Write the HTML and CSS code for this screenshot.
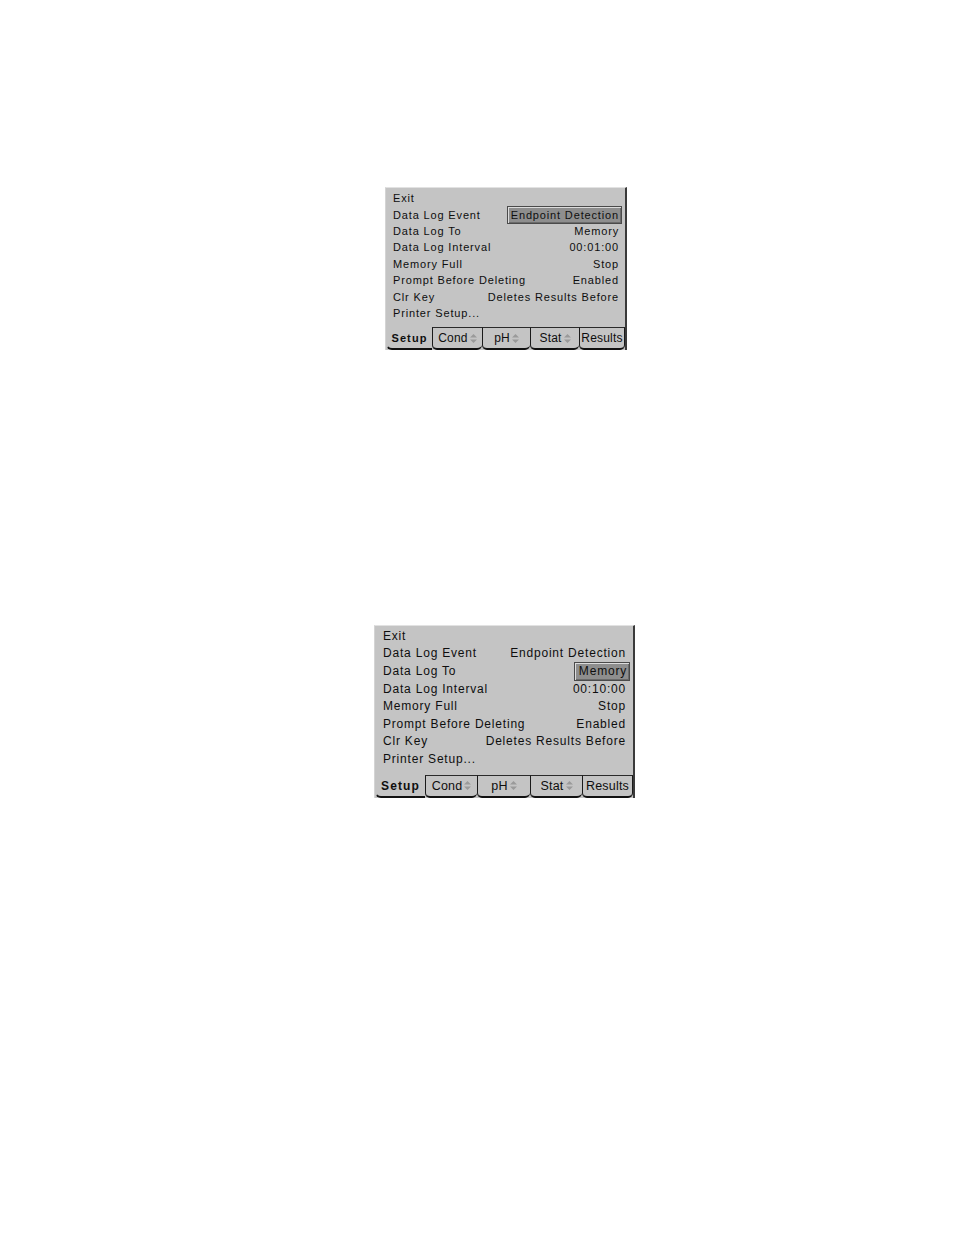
FILE: index.html
```html
<!DOCTYPE html>
<html>
<head>
<meta charset="utf-8">
<link rel="stylesheet" href="styles.css">
</head>
<body>
<div class="page">
  <div class="panel p1">
    <div class="list">
      <div class="row"><span>Exit</span></div>
      <div class="row"><span>Data Log Event</span><span class="val sel">Endpoint Detection</span></div>
      <div class="row"><span>Data Log To</span><span class="val">Memory</span></div>
      <div class="row"><span>Data Log Interval</span><span class="val">00:01:00</span></div>
      <div class="row"><span>Memory Full</span><span class="val">Stop</span></div>
      <div class="row"><span>Prompt Before Deleting</span><span class="val">Enabled</span></div>
      <div class="row"><span>Clr Key</span><span class="val">Deletes Results Before</span></div>
      <div class="row"><span>Printer Setup...</span></div>
    </div>
    <div class="tabs">
      <div class="tab active t1">Setup</div>
      <div class="tab t2">Cond<svg class="ud" viewBox="0 0 7 9"><path d="M3.5 0 L7 3.5 H0 Z M3.5 9 L7 5.5 H0 Z"/></svg></div>
      <div class="tab t3">pH<svg class="ud" viewBox="0 0 7 9"><path d="M3.5 0 L7 3.5 H0 Z M3.5 9 L7 5.5 H0 Z"/></svg></div>
      <div class="tab t4">Stat<svg class="ud" viewBox="0 0 7 9"><path d="M3.5 0 L7 3.5 H0 Z M3.5 9 L7 5.5 H0 Z"/></svg></div>
      <div class="tab t5 last">Results</div>
    </div>
  </div>

  <div class="panel p2">
    <div class="list">
      <div class="row"><span>Exit</span></div>
      <div class="row"><span>Data Log Event</span><span class="val">Endpoint Detection</span></div>
      <div class="row"><span>Data Log To</span><span class="val sel">Memory</span></div>
      <div class="row"><span>Data Log Interval</span><span class="val">00:10:00</span></div>
      <div class="row"><span>Memory Full</span><span class="val">Stop</span></div>
      <div class="row"><span>Prompt Before Deleting</span><span class="val">Enabled</span></div>
      <div class="row"><span>Clr Key</span><span class="val">Deletes Results Before</span></div>
      <div class="row"><span>Printer Setup...</span></div>
    </div>
    <div class="tabs">
      <div class="tab active t1">Setup</div>
      <div class="tab t2">Cond<svg class="ud" viewBox="0 0 7 9"><path d="M3.5 0 L7 3.5 H0 Z M3.5 9 L7 5.5 H0 Z"/></svg></div>
      <div class="tab t3">pH<svg class="ud" viewBox="0 0 7 9"><path d="M3.5 0 L7 3.5 H0 Z M3.5 9 L7 5.5 H0 Z"/></svg></div>
      <div class="tab t4">Stat<svg class="ud" viewBox="0 0 7 9"><path d="M3.5 0 L7 3.5 H0 Z M3.5 9 L7 5.5 H0 Z"/></svg></div>
      <div class="tab t5 last">Results</div>
    </div>
  </div>
</div>
</body>
</html>
```

FILE: styles.css
```css
html, body {
  margin: 0;
  padding: 0;
  background: #ffffff;
}
.page {
  padding-top: 187px;
  font-family: "Liberation Sans", Arial, sans-serif;
  color: #0e0e0e;
}
.panel {
  background: #c4c4c4;
  box-sizing: border-box;
  border-top: 1px solid #e2e2e2;
  border-right: 2px solid #3a3a3a;
  border-left: 1px solid #d4d4d4;
}
.p1 {
  margin-left: 385px;
  width: 242px;
  font-size: 11px;
}
.p2 {
  margin-left: 374px;
  margin-top: 275px;
  width: 261px;
  font-size: 12px;
}
.list {
  display: flex;
  flex-direction: column;
}
.p1 .list {
  padding: 2px 7px 6px 7px;
}
.p2 .list {
  padding: 1px 8px 7px 8px;
}
.row {
  display: flex;
  justify-content: space-between;
  align-items: center;
  white-space: nowrap;
}
.p1 .row { height: 16.4px; letter-spacing: 0.85px; }
.p2 .row { height: 17.57px; letter-spacing: 0.8px; }
.val {
  margin-right: -1px;
}
.val.sel {
  background: #8e8e8e;
  border: 1px solid #4a4a4a;
  box-shadow: inset 1px 1px 0 #dcdcdc, inset -1px -1px 0 #6a6a6a;
  line-height: 14px;
  padding: 1px 2px 1px 3px;
  margin-right: -4px;
}
.p2 .val.sel {
  line-height: 15px;
  padding: 1px 2px 1px 4px;
  margin-right: -5px;
}
.tabs {
  display: flex;
  height: 23px;
  box-sizing: border-box;
}
.tab {
  box-sizing: border-box;
  display: flex;
  align-items: center;
  justify-content: center;
  gap: 1px;
  background: #c4c4c4;
  border-top: 1px solid #2a2a2a;
  border-left: 1px solid #1a1a1a;
  border-bottom: 2px solid #111;
  border-radius: 0 0 5px 5px;
  letter-spacing: 0.2px;
  padding-top: 0;
}
.tab.active {
  border-top: none;
  border-left: 1px solid #c4c4c4;
  font-weight: bold;
  letter-spacing: 1.1px;
  border-bottom-width: 2px;
  border-radius: 0 0 0 6px;
  padding-top: 1px;
}
.tab.last {
  border-right: 1px solid #1a1a1a;
}
.ud {
  width: 7px;
  height: 9px;
  fill: #9a9a9a;
  margin-left: 1px;
}
.p1 .t1 { width: 46px; }
.p1 .t2 { width: 50px; }
.p1 .t3 { width: 48px; }
.p1 .t4 { width: 49px; }
.p1 .t5 { flex: 1; }
.p2 .t1 { width: 50px; }
.p2 .t2 { width: 52px; }
.p2 .t3 { width: 53px; }
.p2 .t4 { width: 52px; }
.p2 .t5 { flex: 1; }
.p1 .tab { font-size: 12px; }
.p2 .tab { font-size: 12.5px; }
.p1 .tab.active { font-size: 11px; }
.p2 .tab.active { font-size: 12px; }
```
